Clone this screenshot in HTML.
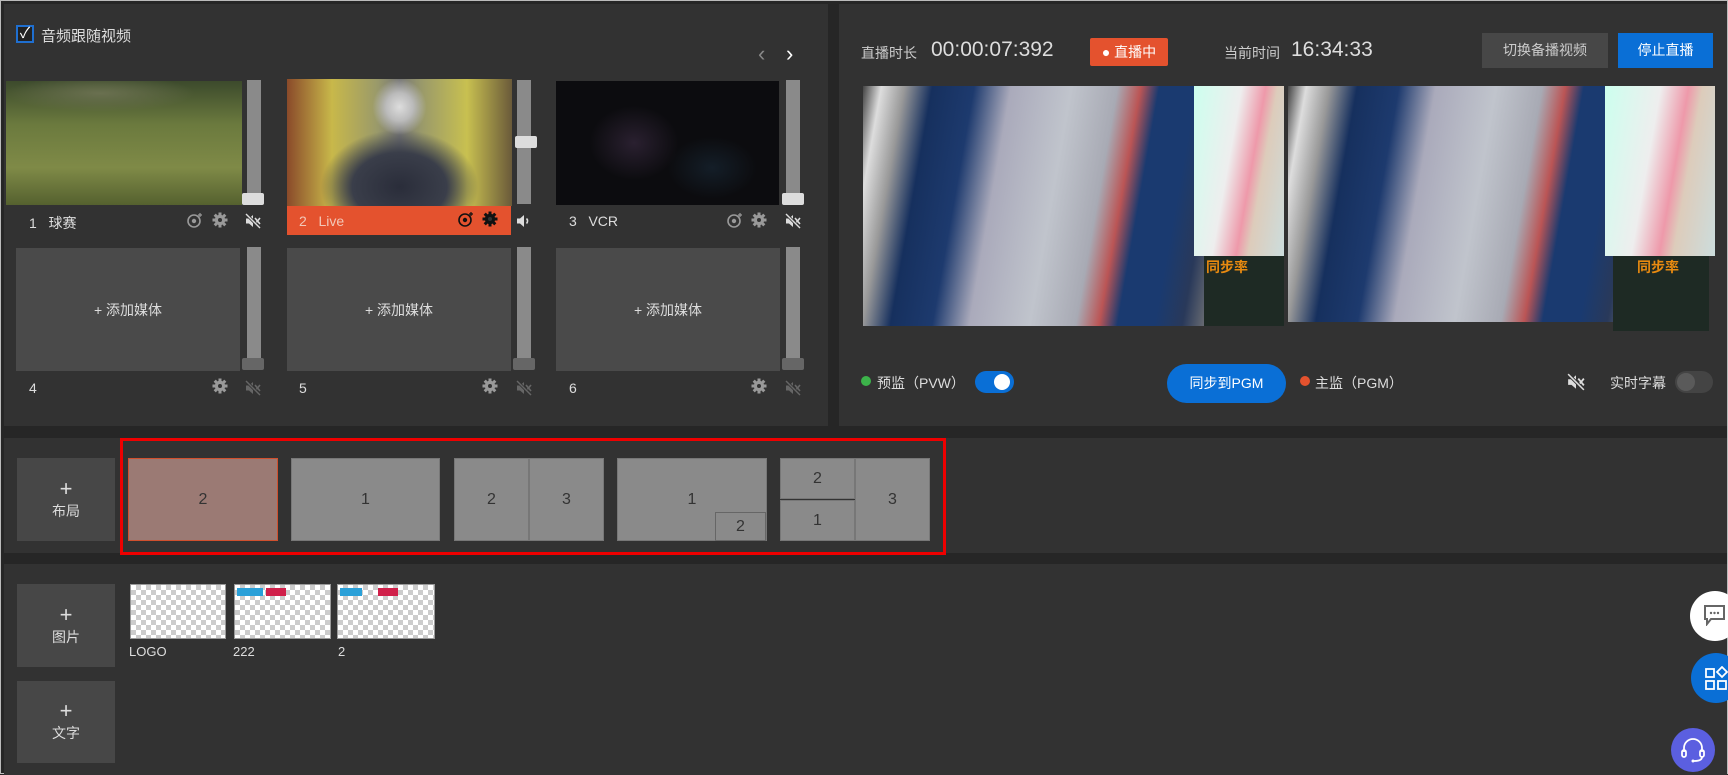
<!DOCTYPE html>
<html><head><meta charset="utf-8"><style>
*{box-sizing:border-box;margin:0;padding:0}
body{width:1728px;height:774px;background:#262626;font-family:"Liberation Sans","Noto Sans CJK SC",sans-serif;color:#ddd;position:relative;overflow:hidden;border:1px solid #bbb}
.a{position:absolute}
.panel{background:#323232}
.slider{position:absolute;width:14px;background:#8a8a8a}
.knob{position:absolute;width:22px;height:12px;background:#ddd;border-radius:2px}
.knob.d{background:#666}
.lbl{position:absolute;font-size:14px;color:#ddd}
.add{position:absolute;background:#4a4a4a;color:#ddd;font-size:14px;display:flex;align-items:center;justify-content:center}
.tile{position:absolute;background:#8a8a8a;border:1px solid #777;color:#333;font-size:16px;display:flex;align-items:center;justify-content:center}
.btn{position:absolute;background:#474747;color:#ddd;font-size:14px;display:flex;flex-direction:column;align-items:center;justify-content:center;line-height:22px}
.chk{background:repeating-conic-gradient(#ccc 0 25%,#fff 0 50%) 0 0/10px 10px}
svg.i{position:absolute}
.vid{background:linear-gradient(100deg,#444 0,#ddd 4%,#999 9%,#16305e 15%,#1d3a6e 24%,#aab 32%,#c0c4cc 45%,#a8aab4 55%,#b55 60%,#1a3a70 64%,#1a3a70 72%,#29395a 78%,#777 84%)}
</style></head><body>
<svg width="0" height="0" style="position:absolute"><defs>
<g id="mute"><path d="M1 5.5h3l4-3.5v12l-4-3.5H1z" fill="currentColor"/><path d="M10 5l5 6M15 5l-5 6" stroke="currentColor" stroke-width="1.6"/><path d="M1 1l14 14" stroke="#323232" stroke-width="3"/><path d="M1 1l14 14" stroke="currentColor" stroke-width="1.4"/></g>
<g id="spk"><path d="M1 5.5h3l4-3.5v12l-4-3.5H1z" fill="currentColor"/><path d="M10.5 5.5a3.5 3.5 0 0 1 0 5" stroke="currentColor" stroke-width="1.6" fill="none"/></g>
<g id="cam"><circle cx="7" cy="9" r="6" fill="none" stroke="currentColor" stroke-width="1.6"/><circle cx="7" cy="9" r="2.2" fill="currentColor"/><path d="M13 1v4M11 3h4" stroke="currentColor" stroke-width="1.2"/></g>
<g id="gear"><circle cx="8" cy="8" r="5.2" fill="currentColor"/><path d="M8 0.5v15M0.5 8h15M2.7 2.7l10.6 10.6M13.3 2.7L2.7 13.3" stroke="currentColor" stroke-width="3"/><circle cx="8" cy="8" r="2" fill="#323232"/></g>
</defs></svg>
<div class="a panel" style="left:3px;top:3px;width:824px;height:422px"></div>
<div class="a panel" style="left:838px;top:3px;width:888px;height:422px"></div>
<div class="a panel" style="left:3px;top:437px;width:1723px;height:115px"></div>
<div class="a panel" style="left:3px;top:563px;width:1723px;height:211px"></div>

<div class="a" style="left:15px;top:24px;width:18px;height:18px;border:2px solid #1f6fd0;background:#222;color:#fff;font-size:15px;line-height:14px;text-align:center">✓</div>
<div class="lbl" style="left:40px;top:24px;font-size:15px">音频跟随视频</div>
<div class="lbl" style="left:757px;top:40px;font-size:22px;color:#888">‹</div>
<div class="lbl" style="left:785px;top:40px;font-size:22px;color:#fff">›</div>

<div class="a" style="left:5px;top:80px;width:236px;height:124px;background:radial-gradient(ellipse 40% 15% at 40% 10%,#6a7050 0,transparent 100%),linear-gradient(#3c4a2c,#6b7a3e 35%,#7f8a47 70%,#55612f)"></div>
<div class="a" style="left:286px;top:78px;width:225px;height:127px;background:radial-gradient(ellipse 12% 22% at 50% 22%,#ddd 0,#bbb 50%,transparent 100%),radial-gradient(ellipse 35% 45% at 50% 85%,#2a2d3a 0,#3a3e4a 60%,transparent 100%),linear-gradient(90deg,#8a4a2a,#c8b84a 20%,#9a9a6a 40%,#777 50%,#9a9a6a 60%,#c8c050 80%,#6a5a3a)"></div>
<div class="a" style="left:555px;top:80px;width:223px;height:124px;background:radial-gradient(ellipse 20% 30% at 35% 50%,#2a2030 0,transparent 100%),radial-gradient(ellipse 20% 25% at 70% 70%,#141e28 0,transparent 100%),#0c0c0f"></div>

<div class="slider" style="left:246px;top:79px;height:124px"></div><div class="knob" style="left:241px;top:192px"></div>
<div class="slider" style="left:516px;top:79px;height:124px"></div><div class="knob" style="left:514px;top:135px"></div>
<div class="slider" style="left:785px;top:79px;height:124px"></div><div class="knob" style="left:781px;top:192px"></div>

<div class="lbl" style="left:28px;top:212px">1&nbsp;&nbsp;&nbsp;球赛</div>
<svg class="i" style="left:186px;top:211px;color:#999" width="16" height="16"><use href="#cam"/></svg>
<svg class="i" style="left:211px;top:211px;color:#999" width="16" height="16"><use href="#gear"/></svg>
<svg class="i" style="left:244px;top:212px;color:#ddd" width="16" height="16"><use href="#mute"/></svg>
<div class="a" style="left:286px;top:205px;width:224px;height:29px;background:#e4522e"></div>
<div class="lbl" style="left:298px;top:212px;color:#f2c8b8">2&nbsp;&nbsp;&nbsp;Live</div>
<svg class="i" style="left:457px;top:210px;color:#111" width="16" height="16"><use href="#cam"/></svg>
<svg class="i" style="left:481px;top:210px;color:#111" width="16" height="16"><use href="#gear"/></svg>
<svg class="i" style="left:515px;top:212px;color:#ddd" width="16" height="16"><use href="#spk"/></svg>
<div class="lbl" style="left:568px;top:212px">3&nbsp;&nbsp;&nbsp;VCR</div>
<svg class="i" style="left:726px;top:211px;color:#999" width="16" height="16"><use href="#cam"/></svg>
<svg class="i" style="left:750px;top:211px;color:#999" width="16" height="16"><use href="#gear"/></svg>
<svg class="i" style="left:784px;top:212px;color:#ddd" width="16" height="16"><use href="#mute"/></svg>

<div class="add" style="left:15px;top:247px;width:224px;height:123px">+ 添加媒体</div>
<div class="add" style="left:286px;top:247px;width:224px;height:123px">+ 添加媒体</div>
<div class="add" style="left:555px;top:247px;width:224px;height:123px">+ 添加媒体</div>
<div class="slider" style="left:246px;top:246px;height:123px"></div><div class="knob d" style="left:241px;top:357px"></div>
<div class="slider" style="left:516px;top:246px;height:123px"></div><div class="knob d" style="left:512px;top:357px"></div>
<div class="slider" style="left:785px;top:246px;height:123px"></div><div class="knob d" style="left:781px;top:357px"></div>
<div class="lbl" style="left:28px;top:379px">4</div>
<svg class="i" style="left:211px;top:377px;color:#999" width="16" height="16"><use href="#gear"/></svg>
<svg class="i" style="left:244px;top:379px;color:#666" width="16" height="16"><use href="#mute"/></svg>
<div class="lbl" style="left:298px;top:379px">5</div>
<svg class="i" style="left:481px;top:377px;color:#999" width="16" height="16"><use href="#gear"/></svg>
<svg class="i" style="left:515px;top:379px;color:#666" width="16" height="16"><use href="#mute"/></svg>
<div class="lbl" style="left:568px;top:379px">6</div>
<svg class="i" style="left:750px;top:377px;color:#999" width="16" height="16"><use href="#gear"/></svg>
<svg class="i" style="left:784px;top:379px;color:#666" width="16" height="16"><use href="#mute"/></svg>

<div class="lbl" style="left:860px;top:42px;color:#ccc">直播时长</div>
<div class="lbl" style="left:930px;top:37px;font-size:21px;color:#ddd">00:00:07:392</div>
<div class="a" style="left:1089px;top:37px;width:78px;height:28px;background:#e4522e;color:#fff;font-size:14px;text-align:center;line-height:28px;border-radius:2px">● 直播中</div>
<div class="lbl" style="left:1223px;top:42px;color:#ccc">当前时间</div>
<div class="lbl" style="left:1290px;top:37px;font-size:21px">16:34:33</div>
<div class="a" style="left:1481px;top:32px;width:126px;height:35px;background:#474747;color:#ccc;font-size:14px;text-align:center;line-height:35px">切换备播视频</div>
<div class="a" style="left:1617px;top:32px;width:95px;height:35px;background:#0a6fd6;color:#fff;font-size:14px;text-align:center;line-height:35px">停止直播</div>

<div class="a vid" style="left:862px;top:85px;width:421px;height:240px"></div>
<div class="a" style="left:1193px;top:85px;width:90px;height:170px;background:linear-gradient(100deg,#cfe,#eee 40%,#e9a 60%,#dcb 70%,#cdd)"></div>
<div class="a" style="left:1203px;top:255px;width:80px;height:70px;background:#1e2a24"></div>
<div class="lbl" style="left:1205px;top:256px;color:#e88a10;font-weight:bold">同步率</div>
<div class="a vid" style="left:1287px;top:85px;width:421px;height:236px"></div>
<div class="a" style="left:1604px;top:85px;width:110px;height:170px;background:linear-gradient(100deg,#cfe,#eee 40%,#e9a 60%,#dcb 70%,#cdd)"></div>
<div class="a" style="left:1612px;top:255px;width:96px;height:75px;background:#1e2a24"></div>
<div class="lbl" style="left:1636px;top:256px;color:#e88a10;font-weight:bold">同步率</div>

<div class="a" style="left:860px;top:375px;width:10px;height:10px;border-radius:50%;background:#3cb34a"></div>
<div class="lbl" style="left:876px;top:372px">预监（PVW）</div>
<div class="a" style="left:974px;top:370px;width:39px;height:22px;border-radius:11px;background:#0a6fd6"></div>
<div class="a" style="left:993px;top:373px;width:16px;height:16px;border-radius:50%;background:#fff"></div>
<div class="a" style="left:1166px;top:363px;width:119px;height:39px;border-radius:20px;background:#0a6fd6;color:#fff;font-size:14px;text-align:center;line-height:39px">同步到PGM</div>
<div class="a" style="left:1299px;top:375px;width:10px;height:10px;border-radius:50%;background:#e4522e"></div>
<div class="lbl" style="left:1314px;top:372px">主监（PGM）</div>
<svg class="i" style="left:1566px;top:372px;color:#ddd" width="18" height="18" viewBox="0 0 16 16"><use href="#mute"/></svg>
<div class="lbl" style="left:1609px;top:372px">实时字幕</div>
<div class="a" style="left:1674px;top:370px;width:38px;height:22px;border-radius:11px;background:#444"></div>
<div class="a" style="left:1676px;top:372px;width:18px;height:18px;border-radius:50%;background:#5a5a5a"></div>

<div class="a" style="left:119px;top:437px;width:826px;height:117px;border:3px solid #e00"></div>
<div class="btn" style="left:16px;top:457px;width:98px;height:83px"><span style="font-size:22px">+</span>布局</div>
<div class="tile" style="left:127px;top:457px;width:150px;height:83px;background:#9b7a74;border-color:#d0502e">2</div>
<div class="tile" style="left:290px;top:457px;width:149px;height:83px">1</div>
<div class="tile" style="left:453px;top:457px;width:75px;height:83px">2</div>
<div class="tile" style="left:528px;top:457px;width:75px;height:83px">3</div>
<div class="tile" style="left:616px;top:457px;width:150px;height:83px">1</div>
<div class="tile" style="left:714px;top:511px;width:51px;height:29px;border-color:#666">2</div>
<div class="tile" style="left:779px;top:457px;width:75px;height:41px">2</div>
<div class="tile" style="left:779px;top:499px;width:75px;height:41px">1</div>
<div class="tile" style="left:854px;top:457px;width:75px;height:83px">3</div>

<div class="btn" style="left:16px;top:583px;width:98px;height:83px"><span style="font-size:22px">+</span>图片</div>
<div class="btn" style="left:16px;top:680px;width:98px;height:82px"><span style="font-size:22px">+</span>文字</div>
<div class="a chk" style="left:129px;top:583px;width:96px;height:55px;border:1px solid #999"></div>
<div class="a chk" style="left:233px;top:583px;width:97px;height:55px;border:1px solid #999"></div>
<div class="a" style="left:236px;top:587px;width:26px;height:8px;background:#2aa0d8"></div><div class="a" style="left:265px;top:587px;width:20px;height:8px;background:#d0204a"></div>
<div class="a chk" style="left:336px;top:583px;width:98px;height:55px;border:1px solid #999"></div>
<div class="a" style="left:339px;top:587px;width:22px;height:8px;background:#2aa0d8"></div><div class="a" style="left:377px;top:587px;width:20px;height:8px;background:#d0204a"></div>
<div class="lbl" style="left:128px;top:643px;font-size:13px">LOGO</div>
<div class="lbl" style="left:232px;top:643px;font-size:13px">222</div>
<div class="lbl" style="left:337px;top:643px;font-size:13px">2</div>

<div class="a" style="left:1689px;top:590px;width:50px;height:50px;border-radius:50%;background:#fff"></div>
<svg class="i" style="left:1702px;top:603px" width="24" height="22"><path d="M2 2h19v13H8l-4 5v-5H2z" fill="none" stroke="#666" stroke-width="2"/><circle cx="8" cy="9" r="1.2" fill="#666"/><circle cx="11.5" cy="9" r="1.2" fill="#666"/><circle cx="15" cy="9" r="1.2" fill="#666"/></svg>
<div class="a" style="left:1690px;top:652px;width:50px;height:50px;border-radius:50%;background:#0a6fd6"></div>
<svg class="i" style="left:1703px;top:665px" width="26" height="26"><g fill="none" stroke="#fff" stroke-width="1.8"><rect x="2" y="3" width="8" height="8"/><rect x="2" y="15" width="8" height="8"/><rect x="14" y="15" width="8" height="8"/><path d="M18 1l5 5-5 5-5-5z"/></g></svg>
<div class="a" style="left:1670px;top:727px;width:44px;height:44px;border-radius:50%;background:#5b5fe0"></div>
<svg class="i" style="left:1678px;top:735px" width="28" height="28"><g fill="none" stroke="#fff" stroke-width="1.8"><path d="M5 16v-4a9 9 0 0 1 18 0v4"/><rect x="3" y="14" width="4" height="7" rx="2"/><rect x="21" y="14" width="4" height="7" rx="2"/><path d="M23 21c0 3-4 4-8 4"/></g><circle cx="14" cy="25" r="1.5" fill="#fff"/></svg>
</body></html>
